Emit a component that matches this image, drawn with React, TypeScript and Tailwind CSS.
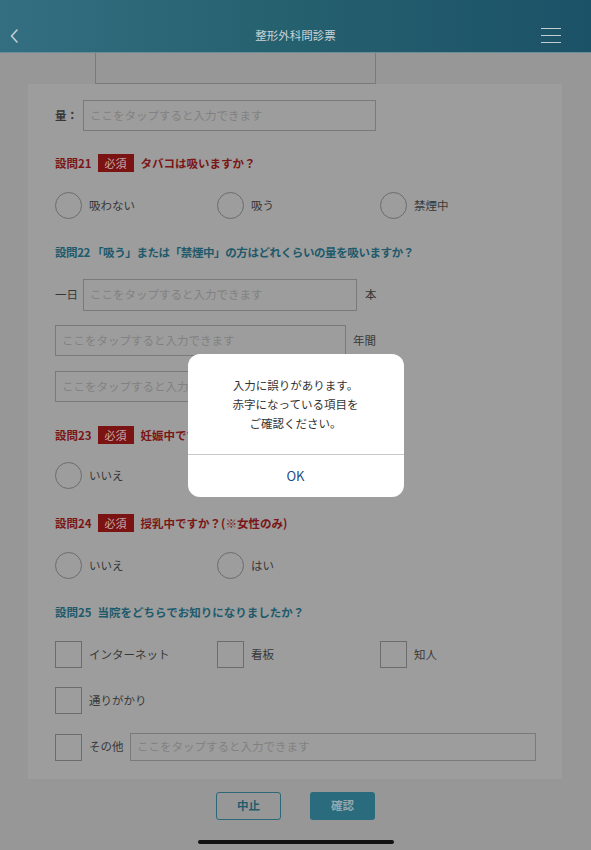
import React from "react";

const FONT = { fontFamily: '"Noto Sans CJK JP", "Noto Sans", sans-serif' };

function Heading({ num, required, text, red, tight, gap = "ml-[2px]" }: { num: string; required?: boolean; text: string; red?: boolean; tight?: boolean; gap?: string }) {
  return (
    <div className={`flex items-center h-4 text-[11.5px] font-bold leading-4 ${red ? "text-[#7b1616]" : "text-[#1e5a6b]"} ${tight ? "tracking-[-0.4px]" : ""}`}>
      <span>{num}</span>
      {required && (
        <span className="ml-[6px] mr-[7px] w-[36px] h-[18px] bg-[#7c1313] text-[#c7a9a9] text-[11px] font-normal flex items-center justify-center">
          必須
        </span>
      )}
      <span className={required ? "" : gap}>{text}</span>
    </div>
  );
}

function Input({ className = "" }: { className?: string }) {
  return (
    <div className={`border border-[#7a7a7a] flex items-center pl-[6px] text-[11.5px] text-[#818181] ${className}`}>
      ここをタップすると入力できます
    </div>
  );
}

function Radio({ label }: { label: string }) {
  return (
    <div className="flex items-center gap-[7px]">
      <div className="w-[27px] h-[27px] rounded-full border-[1.5px] border-[#6c6c6c]" />
      <span className="text-[11.5px] text-[#383838]">{label}</span>
    </div>
  );
}

function Check({ label }: { label: string }) {
  return (
    <div className="flex items-center gap-[7px]">
      <div className="w-[27px] h-[27px] border-[1.5px] border-[#6c6c6c]" />
      <span className="text-[11.5px] text-[#383838]">{label}</span>
    </div>
  );
}

export default function App() {
  return (
    <div className="relative w-[591px] h-[850px] overflow-hidden bg-[#979797]" style={FONT}>
      {/* Header */}
      <header className="h-[53px] pt-[18px] flex items-center justify-between bg-gradient-to-r from-[#336f81] via-[#25606f] to-[#1c5267] border-b border-[#6b8f98] relative">
        <svg width="12" height="16" viewBox="0 0 12 16" className="ml-[9px] mt-[1px]">
          <path d="M8 2 L2.5 8 L8 14" fill="none" stroke="#c3ced2" strokeWidth="1.6" strokeLinecap="round" strokeLinejoin="round" />
        </svg>
        <div className="absolute left-0 right-0 top-[18px] h-[35px] flex items-center justify-center text-[11.5px] text-[#c9d4d8] pointer-events-none">
          整形外科問診票
        </div>
        <div className="mr-[30px] flex flex-col gap-[6px]">
          <div className="w-[20px] h-px bg-[#c3ced2]" />
          <div className="w-[20px] h-px bg-[#c3ced2]" />
          <div className="w-[20px] h-px bg-[#c3ced2]" />
        </div>
      </header>

      {/* partially scrolled input */}
      <div className="ml-[95px] w-[281px] h-[31px] border-x border-b border-[#7a7a7a]" />

      {/* Card */}
      <div className="ml-[28px] w-[534px] bg-[#9d9d9d] pl-[27px] pt-[16px] pb-[18px]">
        <div className="flex items-center h-[31px]">
          <span className="w-[28px] text-[11.5px] font-bold text-[#383838]">量：</span>
          <Input className="w-[293px] h-[31px]" />
        </div>

        <div className="mt-[24px]">
          <Heading num="設問21" required red text="タバコは吸いますか？" />
        </div>
        <div className="mt-[21px] grid grid-cols-[162px_163px_162px]">
          <Radio label="吸わない" />
          <Radio label="吸う" />
          <Radio label="禁煙中" />
        </div>

        <div className="mt-[25px]">
          <Heading num="設問22" tight text="「吸う」または「禁煙中」の方はどれくらいの量を吸いますか？" />
        </div>
        <div className="mt-[19px] flex items-center h-[32px]">
          <span className="w-[28px] text-[11.5px] text-[#383838]">一日</span>
          <Input className="w-[274px] h-[32px]" />
          <span className="ml-[8px] text-[11.5px] text-[#383838]">本</span>
        </div>
        <div className="mt-[14px] flex items-center h-[31px]">
          <Input className="w-[291px] h-[31px]" />
          <span className="ml-[7px] text-[11.5px] text-[#383838]">年間</span>
        </div>
        <div className="mt-[15px] flex items-center h-[31px]">
          <Input className="w-[291px] h-[31px]" />
          <span className="ml-[7px] text-[11.5px] text-[#383838]">ヶ月</span>
        </div>

        <div className="mt-[25px]">
          <Heading num="設問23" required red text="妊娠中ですか？(※女性のみ)" />
        </div>
        <div className="mt-[19px] grid grid-cols-[162px_163px_162px]">
          <Radio label="いいえ" />
          <Radio label="はい" />
        </div>

        <div className="mt-[26px]">
          <Heading num="設問24" required red text="授乳中ですか？(※女性のみ)" />
        </div>
        <div className="mt-[21px] grid grid-cols-[162px_163px_162px]">
          <Radio label="いいえ" />
          <Radio label="はい" />
        </div>

        <div className="mt-[25px]">
          <Heading num="設問25" gap="ml-[6px]" text="当院をどちらでお知りになりましたか？" />
        </div>
        <div className="mt-[21px] grid grid-cols-[162px_163px_162px]">
          <Check label="インターネット" />
          <Check label="看板" />
          <Check label="知人" />
        </div>
        <div className="mt-[19px]">
          <Check label="通りがかり" />
        </div>
        <div className="mt-[19px] flex items-center h-[28px]">
          <div className="w-[27px] h-[27px] border-[1.5px] border-[#6c6c6c]" />
          <span className="ml-[7px] w-[41px] text-[11.5px] text-[#383838]">その他</span>
          <Input className="w-[406px] h-[28px]" />
        </div>
      </div>

      {/* Buttons */}
      <div className="mt-[13px] flex justify-center gap-[29px]">
        <div className="w-[65px] h-[28px] rounded-[3px] border border-[#2b6878] flex items-center justify-center text-[11.5px] font-bold text-[#1f5d6e]">
          中止
        </div>
        <div className="w-[65px] h-[28px] rounded-[3px] bg-[#2a6b7d] flex items-center justify-center text-[11.5px] font-bold text-[#93a9b0]">
          確認
        </div>
      </div>

      {/* Home indicator */}
      <div className="mt-[20px] mx-auto w-[196px] h-[4px] rounded-full bg-[#111111]" />

      {/* Alert */}
      <div className="absolute inset-0 flex items-center justify-center">
        <div className="w-[216px] h-[143px] bg-white rounded-[12px] flex flex-col">
          <div className="h-[100px] flex flex-col items-center justify-center text-[11.5px] leading-[19px] text-[#333333] pt-[2px]">
            <span>入力に誤りがあります。</span>
            <span>赤字になっている項目を</span>
            <span>ご確認ください。</span>
          </div>
          <div className="h-px bg-[#c8c8c8]" />
          <div className="flex-1 flex items-center justify-center text-[13px] text-[#1d4e84]">OK</div>
        </div>
      </div>
    </div>
  );
}
